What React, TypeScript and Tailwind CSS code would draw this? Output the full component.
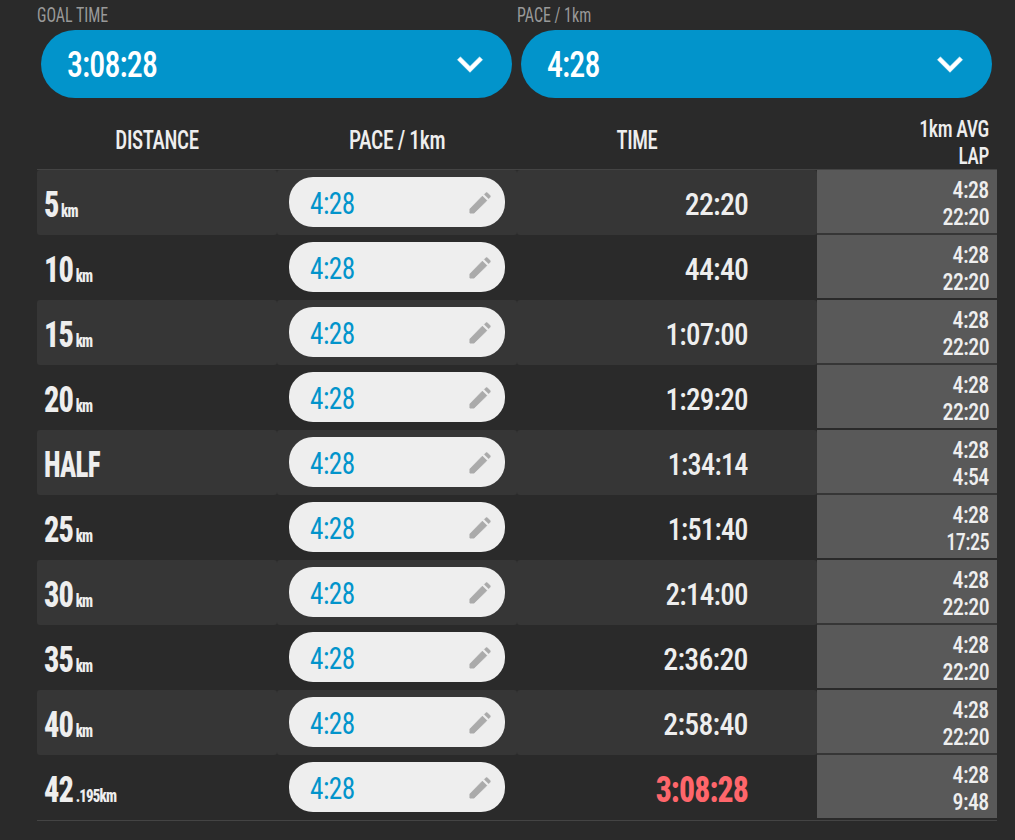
import React from 'react';
import clsx from 'clsx';

interface Split {
  distance: string;
  unit?: string;
  pace: string;
  time: string;
  lap: string;
}

const splits: Split[] = [
  { distance: '5', unit: 'km', pace: '4:28', time: '22:20', lap: '22:20' },
  { distance: '10', unit: 'km', pace: '4:28', time: '44:40', lap: '22:20' },
  { distance: '15', unit: 'km', pace: '4:28', time: '1:07:00', lap: '22:20' },
  { distance: '20', unit: 'km', pace: '4:28', time: '1:29:20', lap: '22:20' },
  { distance: 'HALF', pace: '4:28', time: '1:34:14', lap: '4:54' },
  { distance: '25', unit: 'km', pace: '4:28', time: '1:51:40', lap: '17:25' },
  { distance: '30', unit: 'km', pace: '4:28', time: '2:14:00', lap: '22:20' },
  { distance: '35', unit: 'km', pace: '4:28', time: '2:36:20', lap: '22:20' },
  { distance: '40', unit: 'km', pace: '4:28', time: '2:58:40', lap: '22:20' },
  { distance: '42', unit: '.195km', pace: '4:28', time: '3:08:28', lap: '9:48' },
];

// every "1" makes a number a little narrower
const narrow = (value: string, base: number, step: number) => ({
  transform: `scaleX(${base - step * (value.split('1').length - 1)})`,
});

const ChevronIcon = () => (
  <svg viewBox="0 0 24 24" className="size-[50px] fill-white stroke-white" strokeWidth="0.3">
    <path d="M16.59 8.59L12 13.17 7.41 8.59 6 10l6 6 6-6z" strokeLinejoin="round" />
  </svg>
);

const PencilIcon = () => (
  <svg viewBox="0 0 24 24" className="mt-px size-7 fill-[#aaa]">
    <path
      d="M3.4 17.1V20.6h3.5L17.81 9.94l-3.75-3.75L3.4 17.1z"
      className="stroke-[#aaa]"
      strokeWidth="0.8"
      strokeLinejoin="round"
    />
    <path
      d="M20.71 7.04c.39-.39.39-1.02 0-1.41l-2.34-2.34c-.39-.39-1.02-.39-1.41 0l-1.33 1.33 3.75 3.75 1.33-1.33z"
      className="stroke-[#aaa]"
      strokeWidth="0.3"
    />
  </svg>
);

interface SelectFieldProps {
  label: string;
  value: string;
}

const SelectField = ({ label, value }: SelectFieldProps) => (
  <div className="w-[480px]">
    <div className="h-[30px] text-[21px] leading-[30px] text-[#999]">
      <span className="inline-block origin-left scale-x-[0.76]">{label}</span>
    </div>
    <button className="ml-1 flex h-[68px] w-[471px] items-center justify-between rounded-[34px] bg-[#0294cb] pr-[17.5px] pl-[26px] text-white">
      <span className="inline-block origin-left scale-x-[0.875] pt-[2px] text-[36.5px] leading-none font-medium tracking-[-1px]">
        {value}
      </span>
      <ChevronIcon />
    </button>
  </div>
);

interface SplitRowProps {
  split: Split;
  striped: boolean;
  last: boolean;
}

const SplitRow = ({ split, striped, last }: SplitRowProps) => {
  const cell = clsx('rounded-[3px]', striped && 'bg-[#363636]');

  return (
    <div className="grid h-[65px] grid-cols-[240px_240px_300px_180px]">
      <div className={clsx(cell, 'flex items-center pt-[6px] pl-[7px] font-extrabold')}>
        <div
          className={clsx(
            'origin-left tracking-[-1px] whitespace-nowrap',
            split.unit ? 'scale-x-[0.83]' : 'scale-x-[0.74]'
          )}
        >
          <span className="text-[36.5px] leading-none">{split.distance}</span>
          {split.unit && <span className="ml-[3px] text-[18px] leading-none">{split.unit}</span>}
        </div>
      </div>
      <div className={clsx(cell, 'px-3 pt-[7px]')}>
        <button className="flex h-[50px] w-[216px] items-center justify-between rounded-[24px] bg-[#eee] pr-[11px] pl-[21px] text-[#0294cb]">
          <span className="inline-block origin-left scale-x-[0.88] pt-[2px] text-[31px] leading-none tracking-[-0.6px]">
            {split.pace}
          </span>
          <PencilIcon />
        </button>
      </div>
      <div className={clsx(cell, 'flex items-center justify-end pt-[3px] pr-[69px]')}>
        <span
          className={clsx(
            'inline-block origin-right leading-none',
            last
              ? 'text-[37px] font-extrabold tracking-[-1px] text-[#ff666b]'
              : 'text-[32px] font-medium tracking-[-0.8px]'
          )}
          style={narrow(split.time, last ? 0.855 : 0.93, 0.024)}
        >
          {split.time}
        </span>
      </div>
      <div className={clsx(striped && 'bg-[#363636]')}>
        <div className="flex h-[63px] flex-col items-end bg-[#595959] pt-[7px] pr-2 text-[24px] leading-[27px] font-medium tracking-[-0.6px]">
          <span className="inline-block origin-right scale-x-[0.91]">{split.pace}</span>
          <span className="inline-block origin-right" style={narrow(split.lap, 0.91, 0.07)}>
            {split.lap}
          </span>
        </div>
      </div>
    </div>
  );
};

const App = () => {
  return (
    <div className="h-[840px] w-[1015px] overflow-hidden bg-[#2a2a2a] pl-[37px] font-['Roboto',sans-serif] text-[#eee] [font-stretch:75%]">
      <div className="flex">
        <SelectField label="GOAL TIME" value="3:08:28" />
        <SelectField label="PACE / 1km" value="4:28" />
      </div>

      <div className="mt-[17px] w-[960px] border-b border-[#444]">
        <div className="grid h-[55px] grid-cols-[240px_240px_240px_240px] border-b border-[#444] text-center text-[26px] leading-[51px] font-medium tracking-[-0.5px]">
          <span className="scale-x-[0.81]">DISTANCE</span>
          <span className="scale-x-[0.83]">PACE / 1km</span>
          <span className="scale-x-[0.8]">TIME</span>
          <div className="flex flex-col items-end pt-px pr-2 text-[24px] leading-[27px]">
            <span className="inline-block origin-right scale-x-[0.83]">1km AVG</span>
            <span className="inline-block origin-right scale-x-[0.8]">LAP</span>
          </div>
        </div>
        {splits.map((split, index) => (
          <SplitRow
            key={split.time}
            split={split}
            striped={index % 2 === 0}
            last={index === splits.length - 1}
          />
        ))}
      </div>
    </div>
  );
};

export default App;
